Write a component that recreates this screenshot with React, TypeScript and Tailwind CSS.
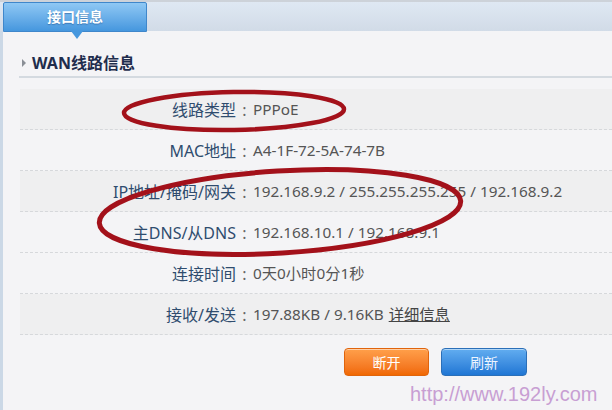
import React from 'react';

const rows = [
  { label: '线路类型', value: 'PPPoE', shade: true },
  { label: 'MAC地址', value: 'A4-1F-72-5A-74-7B', shade: false },
  { label: 'IP地址/掩码/网关', value: '192.168.9.2 / 255.255.255.255 / 192.168.9.2', shade: true },
  { label: '主DNS/从DNS', value: '192.168.10.1 / 192.168.9.1', shade: false },
  { label: '连接时间', value: '0天0小时0分1秒', shade: false },
  { label: '接收/发送', value: '197.88KB / 9.16KB', shade: true, link: '详细信息' },
];

function Annotations() {
  return (
    <svg
      className="absolute inset-0 pointer-events-none"
      width="612"
      height="410"
      viewBox="0 0 612 410"
    >
      <ellipse
        cx="234"
        cy="111"
        rx="110"
        ry="19"
        transform="rotate(-1 234 111)"
        fill="none"
        stroke="#a3111a"
        strokeWidth="4.5"
      />
      <ellipse
        cx="280"
        cy="212"
        rx="181"
        ry="41"
        transform="rotate(-3.5 280 212)"
        fill="none"
        stroke="#a3111a"
        strokeWidth="5"
      />
    </svg>
  );
}

export default function App() {
  return (
    <div
      className="relative w-[612px] h-[410px] overflow-hidden bg-[#f4f4f6]"
      style={{ fontFamily: '"Noto Sans", "Noto Sans CJK SC", sans-serif' }}
    >
      {/* Tab bar */}
      <div className="h-[31px] border-t-2 border-[#cdd2d9] bg-gradient-to-b from-[#dfe8f3] to-[#d1dbe7] pl-[3px]">
        <div className="relative w-[144px] h-[30px] rounded-t-[2px] border border-[#3f87cb] bg-gradient-to-b from-[#8fc8f4] to-[#4597de] flex items-center justify-center">
          <span className="text-[14px] font-bold text-white leading-none [text-shadow:0_1px_1px_rgba(30,80,140,0.5)]">
            接口信息
          </span>
          <span className="absolute left-[67px] top-[28px] w-0 h-0 border-l-[6px] border-r-[6px] border-t-[8px] border-l-transparent border-r-transparent border-t-[#4597de]" />
        </div>
      </div>

      {/* Body */}
      <div className="h-[379px] border-l-[3px] border-[#cbd8e6] pl-[16px]">
        <div className="flex items-center gap-[6px] pt-[22px] pl-[3px]">
          <span className="w-0 h-0 border-t-[4px] border-b-[4px] border-l-[4px] border-t-transparent border-b-transparent border-l-[#8a8f96]" />
          <span className="text-[16px] font-bold leading-[20px] text-[#1f2d4d]">WAN线路信息</span>
        </div>
        <div className="mt-[3px] h-[2px] bg-[#d4dae0]" />

        <div className="mt-[11px] pl-[1px]">
          {rows.map((r) => (
            <div
              key={r.label}
              className={`flex items-center h-[41px] pt-[1px] border-b border-dashed border-[#d6d8db] ${
                r.shade ? 'bg-[#efeff0]' : ''
              }`}
            >
              <div className="w-[216px] text-right text-[16px] text-[#2f4c6e]">{r.label}</div>
              <div className="w-[17px] text-center text-[16px] text-[#666]">:</div>
              <div className="text-[15.3px] text-[#555]">
                {r.value}
                {r.link && <span className="ml-[5px] underline text-[#444]">{r.link}</span>}
              </div>
            </div>
          ))}
        </div>

        <div className="flex gap-[12px] pl-[325px] mt-[13px]">
          <button className="w-[85px] h-[28px] rounded-[4px] border border-[#e0640c] bg-gradient-to-b from-[#ffa04a] to-[#f06800] text-[14px] text-white shadow-[inset_0_1px_0_rgba(255,255,255,0.5)]">
            断开
          </button>
          <button className="w-[86px] h-[28px] rounded-[4px] border border-[#2b6fb8] bg-gradient-to-b from-[#62adf0] to-[#1f76d4] text-[14px] text-[#eef5ff] shadow-[inset_0_1px_0_rgba(255,255,255,0.5)]">
            刷新
          </button>
        </div>
      </div>

      <div
        className="absolute left-[410px] top-[382px] text-[20px] leading-[24px] text-[#c89fd3]"
        style={{ fontFamily: '"Liberation Sans", Arial, sans-serif' }}
      >
        http://www.192ly.com
      </div>

      <Annotations />
    </div>
  );
}
